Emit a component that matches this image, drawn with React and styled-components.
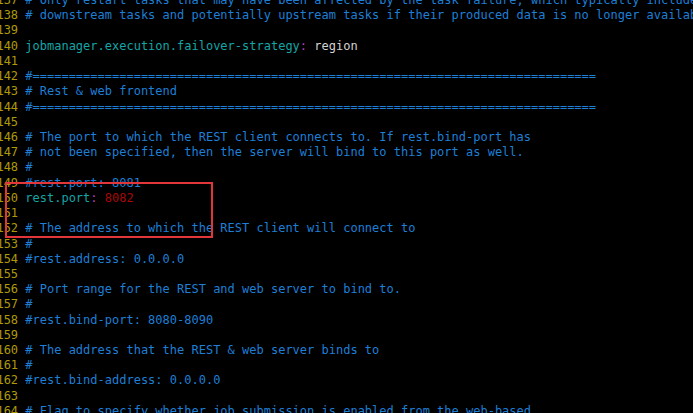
import React from "react";
import styled, { createGlobalStyle } from "styled-components";

const Global = createGlobalStyle`
  html, body { margin: 0; padding: 0; background: #000; }
  body { overflow: hidden; }
`;

const Screen = styled.div`
  position: relative;
  width: 693px;
  height: 413px;
  background: #000;
  overflow: hidden;
`;

const Buffer = styled.div`
  margin: -7px 0 0 -3.6px;
  font-family: "DejaVu Sans Mono", "Liberation Mono", monospace;
  font-size: 12px;
  line-height: 15.23px;
  white-space: pre;
`;

const Row = styled.div`
  display: flex;
  height: 15.23px;
`;

const LineNo = styled.span`
  flex: 0 0 auto;
  width: 3ch;
  text-align: right;
  margin-right: 1ch;
  color: #ae9a06;
`;

const Tok = styled.span`
  color: ${(p) =>
    p.$kind === "comment"
      ? "#1d7fd6"
      : p.$kind === "key"
      ? "#14a5a5"
      : p.$kind === "colon"
      ? "#b83cb8"
      : p.$kind === "num"
      ? "#a80808"
      : "#d2d2d2"};
`;

const Highlight = styled.div`
  position: absolute;
  left: 5px;
  top: 182px;
  width: 204px;
  height: 52px;
  border: 2px solid #e2363a;
  pointer-events: none;
`;

const rule = "#" + "=".repeat(78);

const c = (t) => [["comment", t]];
const kv = (k, v, vk = "plain") => [
  ["key", k],
  ["colon", ":"],
  ["plain", " "],
  [vk, v],
];

const lines = [
  c("# Only restart tasks that may have been affected by the task failure, which typically includes"),
  c("# downstream tasks and potentially upstream tasks if their produced data is no longer available for consumption."),
  [],
  kv("jobmanager.execution.failover-strategy", "region"),
  [],
  c(rule),
  c("# Rest & web frontend"),
  c(rule),
  [],
  c("# The port to which the REST client connects to. If rest.bind-port has"),
  c("# not been specified, then the server will bind to this port as well."),
  c("#"),
  c("#rest.port: 8081"),
  kv("rest.port", "8082", "num"),
  [],
  c("# The address to which the REST client will connect to"),
  c("#"),
  c("#rest.address: 0.0.0.0"),
  [],
  c("# Port range for the REST and web server to bind to."),
  c("#"),
  c("#rest.bind-port: 8080-8090"),
  [],
  c("# The address that the REST & web server binds to"),
  c("#"),
  c("#rest.bind-address: 0.0.0.0"),
  [],
  c("# Flag to specify whether job submission is enabled from the web-based"),
];

export default function App() {
  return (
    <>
      <Global />
      <Screen>
        <Buffer>
          {lines.map((toks, i) => (
            <Row key={i}>
              <LineNo>{137 + i}</LineNo>
              {toks.map(([k, t], j) => (
                <Tok key={j} $kind={k}>
                  {t}
                </Tok>
              ))}
            </Row>
          ))}
        </Buffer>
        <Highlight />
      </Screen>
    </>
  );
}
